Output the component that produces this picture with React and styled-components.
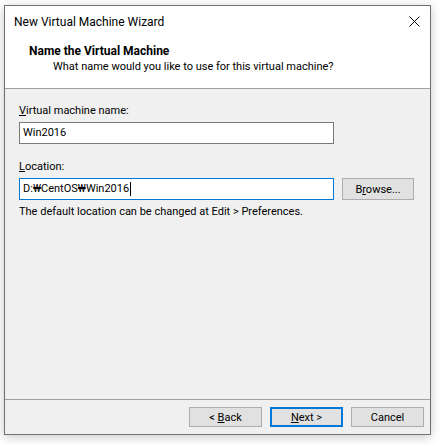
import React from 'react';
import styled, { createGlobalStyle } from 'styled-components';

const GlobalStyle = createGlobalStyle`
  html, body {
    margin: 0;
    padding: 0;
    background: #ffffff;
  }
  body {
    font-family: Roboto, "Noto Sans", "Noto Sans CJK KR", sans-serif;
    font-size: 11px;
    color: #000;
  }
`;

const Page = styled.div`
  width: 444px;
  height: 445px;
  padding: 5px 0 0 4px;
  box-sizing: border-box;
`;

const Window = styled.div`
  width: 427px;
  height: 430px;
  box-sizing: border-box;
  border: 1px solid #6f6f6f;
  background: #f0f0f0;
  display: flex;
  flex-direction: column;
  box-shadow: 0 2px 10px rgba(0, 0, 0, 0.22);
`;

const Header = styled.div`
  background: #ffffff;
  height: 82px;
  display: flex;
  flex-direction: column;
  border-bottom: 1px solid #a0a0a0;
  flex-shrink: 0;
`;

const TitleBar = styled.div`
  height: 31px;
  display: flex;
  align-items: center;
  justify-content: space-between;
  padding: 0 10px 0 9px;
`;

const Title = styled.span`
  font-size: 12px;
  color: #000;
`;

const Close = styled.div`
  width: 12px;
  height: 12px;
  display: flex;
  align-items: center;
  justify-content: center;
`;

const HeadText = styled.div`
  padding: 6px 0 0 24px;
  line-height: 16px;
`;

const Heading = styled.div`
  font-weight: bold;
  font-size: 12px;
`;

const Sub = styled.div`
  padding-left: 24px;
`;

const Body = styled.div`
  flex: 1;
  padding: 14px 13px 0 14px;
  display: flex;
  flex-direction: column;
  border-bottom: 1px solid #a0a0a0;
`;

const Label = styled.div`
  line-height: 16px;
  margin-bottom: 3px;
`;

const Row = styled.div`
  display: flex;
  align-items: center;
  gap: 8px;
  margin-bottom: ${p => p.$gap || 0}px;
`;

const Field = styled.div`
  width: 315px;
  height: 22px;
  box-sizing: border-box;
  background: #fff;
  border: 1px solid ${p => (p.$focus ? '#0078d7' : '#7a7a7a')};
  padding: 0 3px;
  display: flex;
  align-items: center;
  line-height: 16px;
`;

const Caret = styled.span`
  display: inline-block;
  width: 1px;
  height: 14px;
  background: #000;
  margin-left: 1px;
`;

const Button = styled.div`
  width: ${p => p.$w || 73}px;
  height: ${p => p.$h || 20}px;
  box-sizing: border-box;
  background: #e1e1e1;
  border: ${p => (p.$default ? '2px solid #0078d7' : '1px solid #adadad')};
  display: flex;
  align-items: center;
  justify-content: center;
  color: #000;
  white-space: pre;
`;

const Hint = styled.div`
  margin-top: 4px;
  line-height: 16px;
`;

const Footer = styled.div`
  height: 34px;
  display: flex;
  align-items: center;
  justify-content: flex-end;
  gap: 8px;
  padding-right: 6px;
  flex-shrink: 0;
`;

export default function App() {
  return (
    <Page>
      <GlobalStyle />
      <Window>
        <Header>
          <TitleBar>
            <Title>New Virtual Machine Wizard</Title>
            <Close>
              <svg width="11" height="11" viewBox="0 0 11 11">
                <path d="M0.5 0.5 L10.5 10.5 M10.5 0.5 L0.5 10.5" stroke="#000" strokeWidth="1" />
              </svg>
            </Close>
          </TitleBar>
          <HeadText>
            <Heading>Name the Virtual Machine</Heading>
            <Sub>What name would you like to use for this virtual machine?</Sub>
          </HeadText>
        </Header>
        <Body>
          <Label><u>V</u>irtual machine name:</Label>
          <Row $gap={15}>
            <Field>Win2016</Field>
          </Row>
          <Label><u>L</u>ocation:</Label>
          <Row>
            <Field $focus>D:₩CentOS₩Win2016<Caret /></Field>
            <Button $w={72} $h={22}><span>B<u>r</u>owse...</span></Button>
          </Row>
          <Hint>The default location can be changed at Edit &gt; Preferences.</Hint>
        </Body>
        <Footer>
          <Button><span>&lt; <u>B</u>ack</span></Button>
          <Button $default><span><u>N</u>ext &gt;</span></Button>
          <Button>Cancel</Button>
        </Footer>
      </Window>
    </Page>
  );
}
